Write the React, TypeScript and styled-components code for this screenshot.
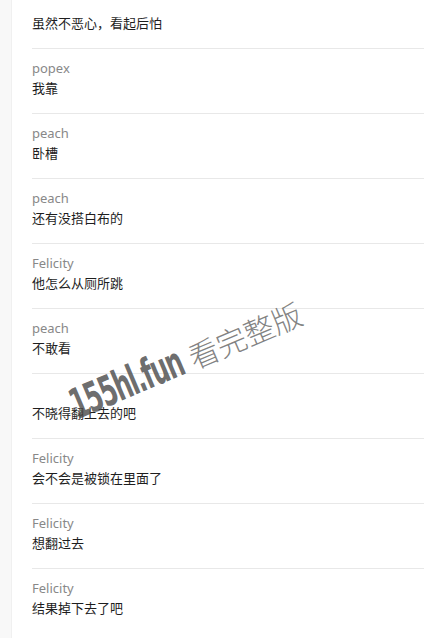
import styled, { createGlobalStyle } from "styled-components";

const GlobalStyle = createGlobalStyle`
    html, body {
        margin: 0;
        padding: 0;
        background: #ffffff;
        overflow: hidden;
    }
    body {
        font-family: "Noto Sans", "Noto Sans CJK SC", sans-serif;
    }
`;

const Page = styled.div`
    position: relative;
    display: flex;
    width: 424px;
    height: 638px;
    overflow: hidden;
    background: #ffffff;
`;

const Gutter = styled.div`
    width: 11px;
    flex-shrink: 0;
    background: #f8f8f8;
    border-right: 1px solid #f0f0f0;
`;

const List = styled.ul`
    flex: 1;
    list-style: none;
    margin: -17px 0 0;
    padding: 0 0 0 20px;
`;

const Item = styled.li`
    border-top: 1px solid #e8e8e8;
    padding: 9px 0 15px;
`;

const Name = styled.div`
    font-size: 13px;
    line-height: 20px;
    height: 20px;
    color: #888888;
`;

const Text = styled.div`
    font-family: "Noto Sans CJK SC", sans-serif;
    font-size: 13px;
    line-height: 20px;
    color: #1e1e1e;
`;

const Watermark = styled.div`
    position: absolute;
    left: 80px;
    bottom: 212px;
    display: flex;
    align-items: baseline;
    transform: rotate(-23deg);
    transform-origin: left bottom;
    pointer-events: none;
    white-space: nowrap;
    line-height: 1;
`;

const Domain = styled.span`
    font-family: "DejaVu Sans Condensed", "Liberation Sans Narrow", sans-serif;
    font-weight: 700;
    font-size: 42px;
    letter-spacing: -2px;
    color: rgba(70, 70, 70, 0.8);
    display: inline-block;
    transform: scaleX(0.64);
    transform-origin: left;
    margin-right: -58px;
`;

const Label = styled.span`
    font-family: "Noto Sans CJK SC", sans-serif;
    font-weight: 300;
    font-size: 30px;
    color: rgba(90, 90, 90, 0.75);
`;

type Comment = {
    name: string;
    text: string;
};

const comments: Comment[] = [
    { name: "", text: "虽然不恶心，看起后怕" },
    { name: "popex", text: "我靠" },
    { name: "peach", text: "卧槽" },
    { name: "peach", text: "还有没搭白布的" },
    { name: "Felicity", text: "他怎么从厕所跳" },
    { name: "peach", text: "不敢看" },
    { name: "", text: "不晓得翻上去的吧" },
    { name: "Felicity", text: "会不会是被锁在里面了" },
    { name: "Felicity", text: "想翻过去" },
    { name: "Felicity", text: "结果掉下去了吧" },
];

const App = () => {
    return (
        <>
            <GlobalStyle />
            <Page>
                <Gutter />
                <List>
                    {comments.map((c, i) => (
                        <Item key={i}>
                            <Name>{c.name}</Name>
                            <Text>{c.text}</Text>
                        </Item>
                    ))}
                </List>
                <Watermark>
                    <Domain>155hl.fun</Domain>
                    <Label>看完整版</Label>
                </Watermark>
            </Page>
        </>
    );
};

export default App;
